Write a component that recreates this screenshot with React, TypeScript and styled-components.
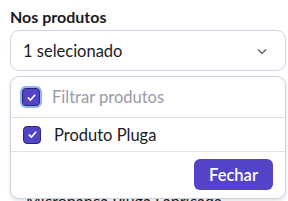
import { useState } from "react";
import styled, { createGlobalStyle } from "styled-components";

const GlobalStyle = createGlobalStyle`
  body {
    margin: 0;
    background: #ffffff;
    font-family: Lato, "Noto Sans", sans-serif;
    color: #1b1b24;
  }
`;

const products = ["Produto Pluga"];

export default function App() {
  const [checked, setChecked] = useState(true);

  return (
    <>
      <GlobalStyle />
      <Field>
        <Label>Nos produtos</Label>
        <Select>
          <span>1 selecionado</span>
          <svg width="12" height="12" viewBox="0 0 12 12">
            <path d="M2 4.5l4 4 4-4" fill="none" stroke="#555" strokeWidth="1.2" />
          </svg>
        </Select>
        <Behind>
          <BehindItem>Microbanca Pluga Fabricada</BehindItem>
        </Behind>
        <Menu>
          <SearchRow>
            <Check $focused checked />
            <SearchInput placeholder="Filtrar produtos" />
          </SearchRow>
          {products.map((name) => (
            <OptionRow key={name} onClick={() => setChecked(!checked)}>
              <Check checked={checked} />
              <span>{name}</span>
            </OptionRow>
          ))}
          <Footer>
            <CloseButton>Fechar</CloseButton>
          </Footer>
        </Menu>
      </Field>
    </>
  );
}

const Check = ({ checked, $focused }: { checked: boolean; $focused?: boolean }) => (
  <CheckBox $focused={$focused}>
    {checked && (
      <svg width="11" height="11" viewBox="0 0 12 12">
        <path
          d="M2.5 6.5l2.4 2.3L9.5 3.5"
          fill="none"
          stroke="#fff"
          strokeWidth="1.8"
          strokeLinecap="round"
          strokeLinejoin="round"
        />
      </svg>
    )}
  </CheckBox>
);

const Field = styled.div`
  position: relative;
  padding: 5px 2px 0 10px;
`;

const Label = styled.div`
  font-size: 16px;
  font-weight: 700;
  line-height: 23px;
  margin-bottom: 2px;
`;

const Select = styled.div`
  display: flex;
  align-items: center;
  justify-content: space-between;
  height: 41px;
  box-sizing: border-box;
  padding: 0 17px 0 12px;
  border: 1px solid #cdd5e3;
  border-radius: 9px;
  font-size: 16.5px;
`;

const Behind = styled.div`
  padding: 120px 0 0 16px;
`;

const BehindItem = styled.div`
  font-size: 16px;
  line-height: 20px;
`;

const Menu = styled.div`
  position: absolute;
  top: 76px;
  left: 10px;
  right: 2px;
  background: #fff;
  border: 1px solid #cdd5e3;
  border-radius: 9px;
  box-shadow: 0 2px 4px rgba(0, 0, 0, 0.12);
  overflow: hidden;
`;

const SearchRow = styled.div`
  display: flex;
  align-items: center;
  gap: 12px;
  height: 40px;
  padding: 0 11px;
  border-bottom: 1px solid #dde2ea;
`;

const SearchInput = styled.input`
  border: none;
  outline: none;
  flex: 1;
  font-family: inherit;
  font-size: 16.5px;
  padding: 0;
  color: #1b1b24;
  &::placeholder {
    color: #9a9aa6;
  }
`;

const OptionRow = styled.div`
  display: flex;
  align-items: center;
  gap: 13px;
  height: 33px;
  padding: 0 12px;
  font-size: 16.5px;
  border-bottom: 1px solid #dde2ea;
  cursor: pointer;
`;

const CheckBox = styled.div<{ $focused?: boolean }>`
  display: flex;
  align-items: center;
  justify-content: center;
  width: 18px;
  height: 18px;
  box-sizing: border-box;
  border-radius: 4px;
  background: #5343c6;
  border: 1.5px solid #2e2670;
  box-shadow: ${(p) => (p.$focused ? "0 0 0 2px #8fb4f5" : "none")};
`;

const Footer = styled.div`
  display: flex;
  justify-content: flex-end;
  padding: 7px 12px 8px;
`;

const CloseButton = styled.button`
  height: 31px;
  padding: 0 15px;
  border: none;
  border-radius: 6px;
  background: #5343c6;
  color: #fff;
  font-family: inherit;
  font-size: 16.5px;
  font-weight: 600;
`;
